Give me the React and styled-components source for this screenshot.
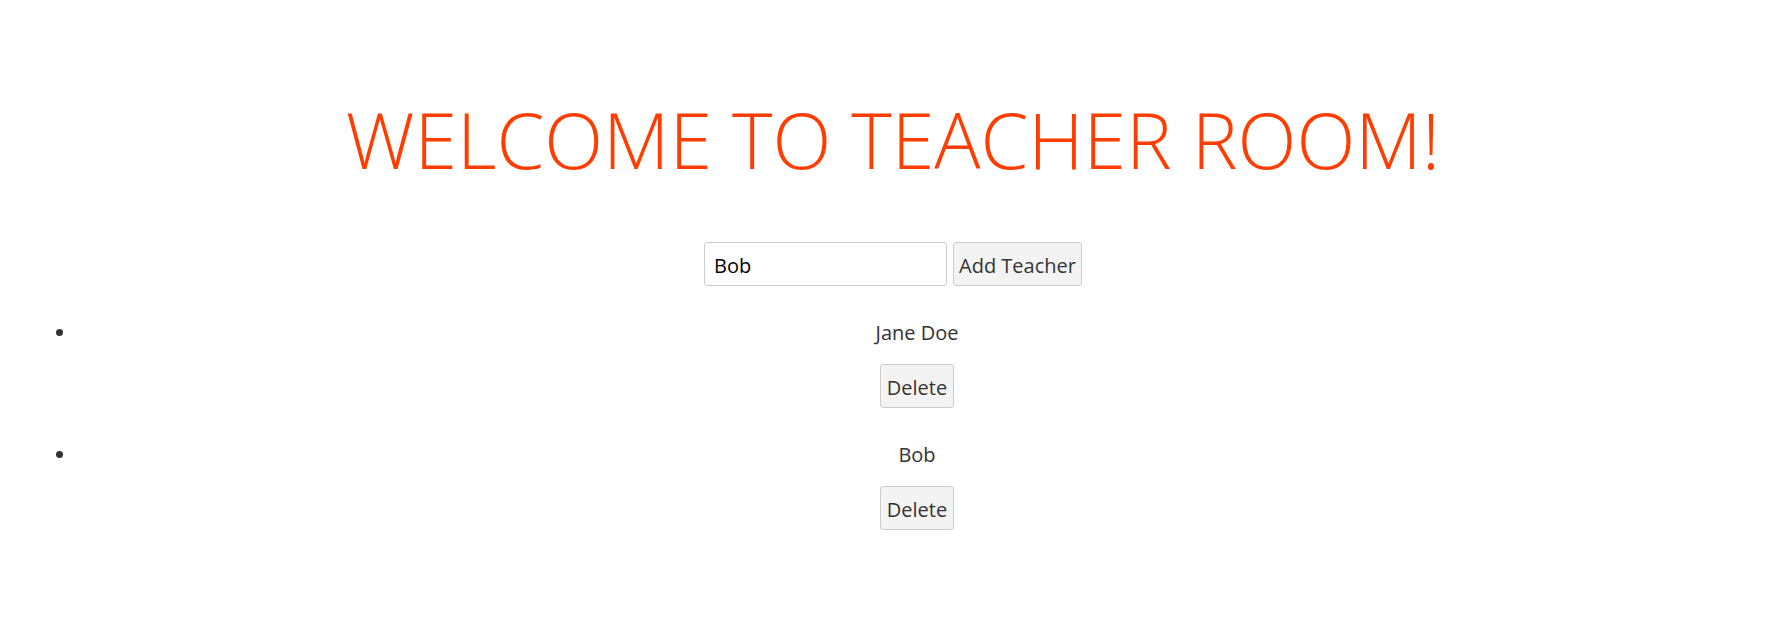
import { useState } from 'react';
import styled, { createGlobalStyle } from 'styled-components';

const GlobalStyle = createGlobalStyle`
  html, body {
    margin: 0;
    padding: 0;
    background: #ffffff;
  }
  body {
    font-family: "Open Sans", "Noto Sans", "DejaVu Sans", sans-serif;
    font-size: 20px;
    color: #333333;
  }
`;

const Page = styled.div`
  padding: 98px 0 40px;
`;

const Title = styled.h1`
  margin: 0 0 59px;
  text-align: center;
  font-size: 77px;
  font-weight: 300;
  line-height: 1.1;
  color: #ff3d00;
`;

const Form = styled.form`
  display: flex;
  justify-content: center;
  gap: 6px;
`;

const Input = styled.input`
  box-sizing: border-box;
  width: 243px;
  height: 44px;
  padding: 3px 9px 0;
  border: 1px solid #cccccc;
  border-radius: 3px;
  font: inherit;
  color: #000000;
  outline: none;
`;

const Button = styled.button`
  box-sizing: border-box;
  height: 44px;
  padding: 3px ${(p) => (p.$wide ? '5px' : '6px')} 0;
  border: 1px solid #cccccc;
  border-radius: 3px;
  background: #f3f3f3;
  font: inherit;
  color: #333333;
  cursor: pointer;
`;

const List = styled.ul`
  margin: 32px 29px 0 37px;
  padding-left: 40px;
  list-style: disc;
`;

const Item = styled.li`
  text-align: center;
  margin-bottom: 32px;
`;

const Name = styled.div`
  line-height: 28px;
  padding-top: 1px;
  margin-bottom: 17px;
`;

export default function App() {
  const [name, setName] = useState('Bob');
  const [teachers, setTeachers] = useState(['Jane Doe', 'Bob']);

  const addTeacher = (e) => {
    e.preventDefault();
    if (name.trim()) setTeachers([...teachers, name.trim()]);
  };

  return (
    <Page>
      <GlobalStyle />
      <Title>WELCOME TO TEACHER ROOM!</Title>
      <Form onSubmit={addTeacher}>
        <Input value={name} onChange={(e) => setName(e.target.value)} />
        <Button type="submit" $wide>
          Add Teacher
        </Button>
      </Form>
      <List>
        {teachers.map((t, i) => (
          <Item key={i}>
            <Name>{t}</Name>
            <Button
              type="button"
              onClick={() => setTeachers(teachers.filter((_, j) => j !== i))}
            >
              Delete
            </Button>
          </Item>
        ))}
      </List>
    </Page>
  );
}
